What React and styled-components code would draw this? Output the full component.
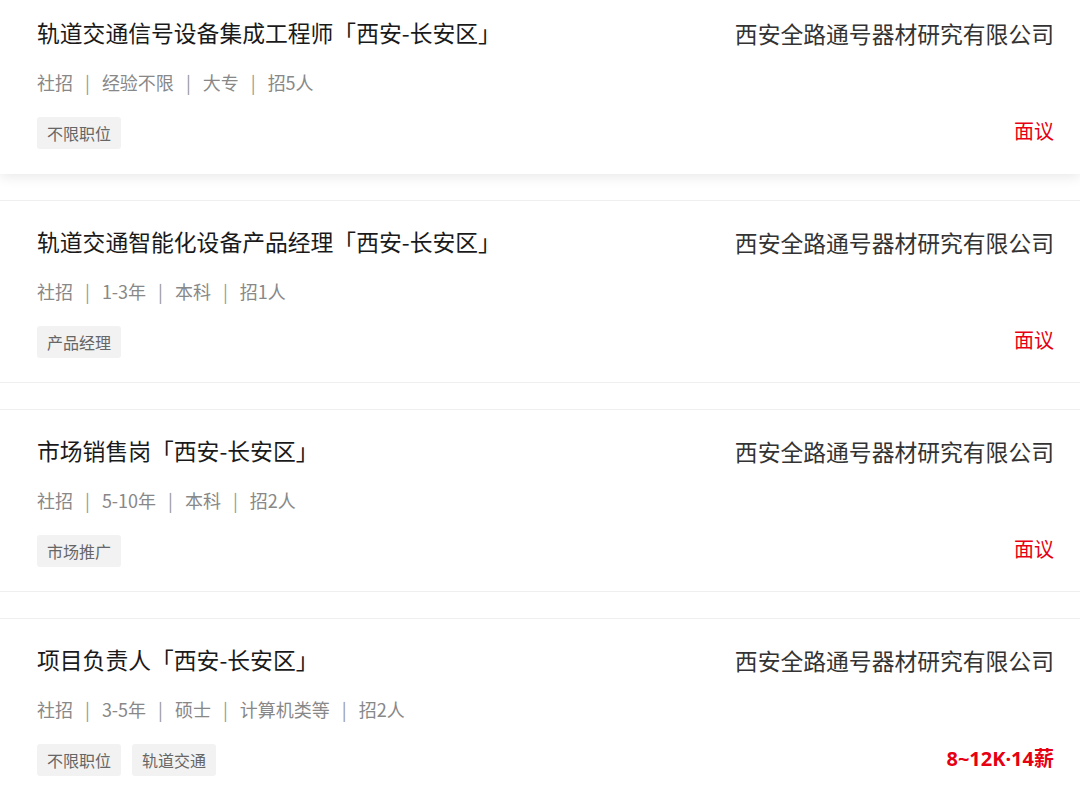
import React from "react";
import styled, { createGlobalStyle } from "styled-components";

const Global = createGlobalStyle`
  html, body { margin: 0; padding: 0; background: #fff; }
  body {
    font-family: "Microsoft YaHei", "Noto Sans CJK SC", "Noto Sans", sans-serif;
    overflow: hidden;
  }
`;

const List = styled.div`
  margin-top: -9px;
  display: flex;
  flex-direction: column;
  gap: 26px;
`;

const Card = styled.div`
  box-sizing: border-box;
  height: 183px;
  display: flex;
  justify-content: space-between;
  padding: 26px 26px 25px 37px;
  background: #fff;
  border-top: 1px solid ${(p) => (p.$active ? "transparent" : "#efefef")};
  border-bottom: 1px solid ${(p) => (p.$active ? "transparent" : "#efefef")};
  box-shadow: ${(p) => (p.$active ? "0 3px 12px rgba(0,0,0,0.09)" : "none")};
  position: relative;
`;

const Left = styled.div`
  display: flex;
  flex-direction: column;
`;

const Title = styled.div`
  font-size: 22.8px;
  line-height: 30px;
  color: #1a1a1a;
`;

const Meta = styled.div`
  margin-top: 22px;
  display: flex;
  align-items: center;
  font-size: 18px;
  line-height: 24px;
  color: #888;
`;

const Sep = styled.span`
  margin: 0 12px;
  color: #999;
`;

const Tags = styled.div`
  margin-top: 23px;
  display: flex;
  gap: 11px;
`;

const Tag = styled.span`
  height: 32px;
  line-height: 32px;
  padding: 0 10px;
  font-size: 16px;
  color: #666;
  background: #f2f2f2;
  border-radius: 3px;
`;

const Right = styled.div`
  display: flex;
  flex-direction: column;
  justify-content: space-between;
  align-items: flex-end;
`;

const Company = styled.div`
  font-size: 22.8px;
  line-height: 32px;
  color: #333;
`;

const Salary = styled.div`
  font-family: "Noto Sans", "Noto Sans CJK SC", sans-serif;
  font-size: 20px;
  font-weight: ${(p) => (p.$bold ? 700 : 400)};
  line-height: 32px;
  color: #e60012;
`;

const jobs = [
  {
    title: "轨道交通信号设备集成工程师「西安-长安区」",
    meta: ["社招", "经验不限", "大专", "招5人"],
    tags: ["不限职位"],
    salary: "面议",
    active: true,
  },
  {
    title: "轨道交通智能化设备产品经理「西安-长安区」",
    meta: ["社招", "1-3年", "本科", "招1人"],
    tags: ["产品经理"],
    salary: "面议",
  },
  {
    title: "市场销售岗「西安-长安区」",
    meta: ["社招", "5-10年", "本科", "招2人"],
    tags: ["市场推广"],
    salary: "面议",
  },
  {
    title: "项目负责人「西安-长安区」",
    meta: ["社招", "3-5年", "硕士", "计算机类等", "招2人"],
    tags: ["不限职位", "轨道交通"],
    salary: "8~12K·14薪",
    bold: true,
  },
];

export default function App() {
  return (
    <>
      <Global />
      <List>
        {jobs.map((j, i) => (
          <Card key={i} $active={j.active}>
            <Left>
              <Title>{j.title}</Title>
              <Meta>
                {j.meta.map((m, k) => (
                  <React.Fragment key={k}>
                    {k > 0 && <Sep>|</Sep>}
                    <span>{m}</span>
                  </React.Fragment>
                ))}
              </Meta>
              <Tags>
                {j.tags.map((t) => (
                  <Tag key={t}>{t}</Tag>
                ))}
              </Tags>
            </Left>
            <Right>
              <Company>西安全路通号器材研究有限公司</Company>
              <Salary $bold={j.bold}>{j.salary}</Salary>
            </Right>
          </Card>
        ))}
      </List>
    </>
  );
}
